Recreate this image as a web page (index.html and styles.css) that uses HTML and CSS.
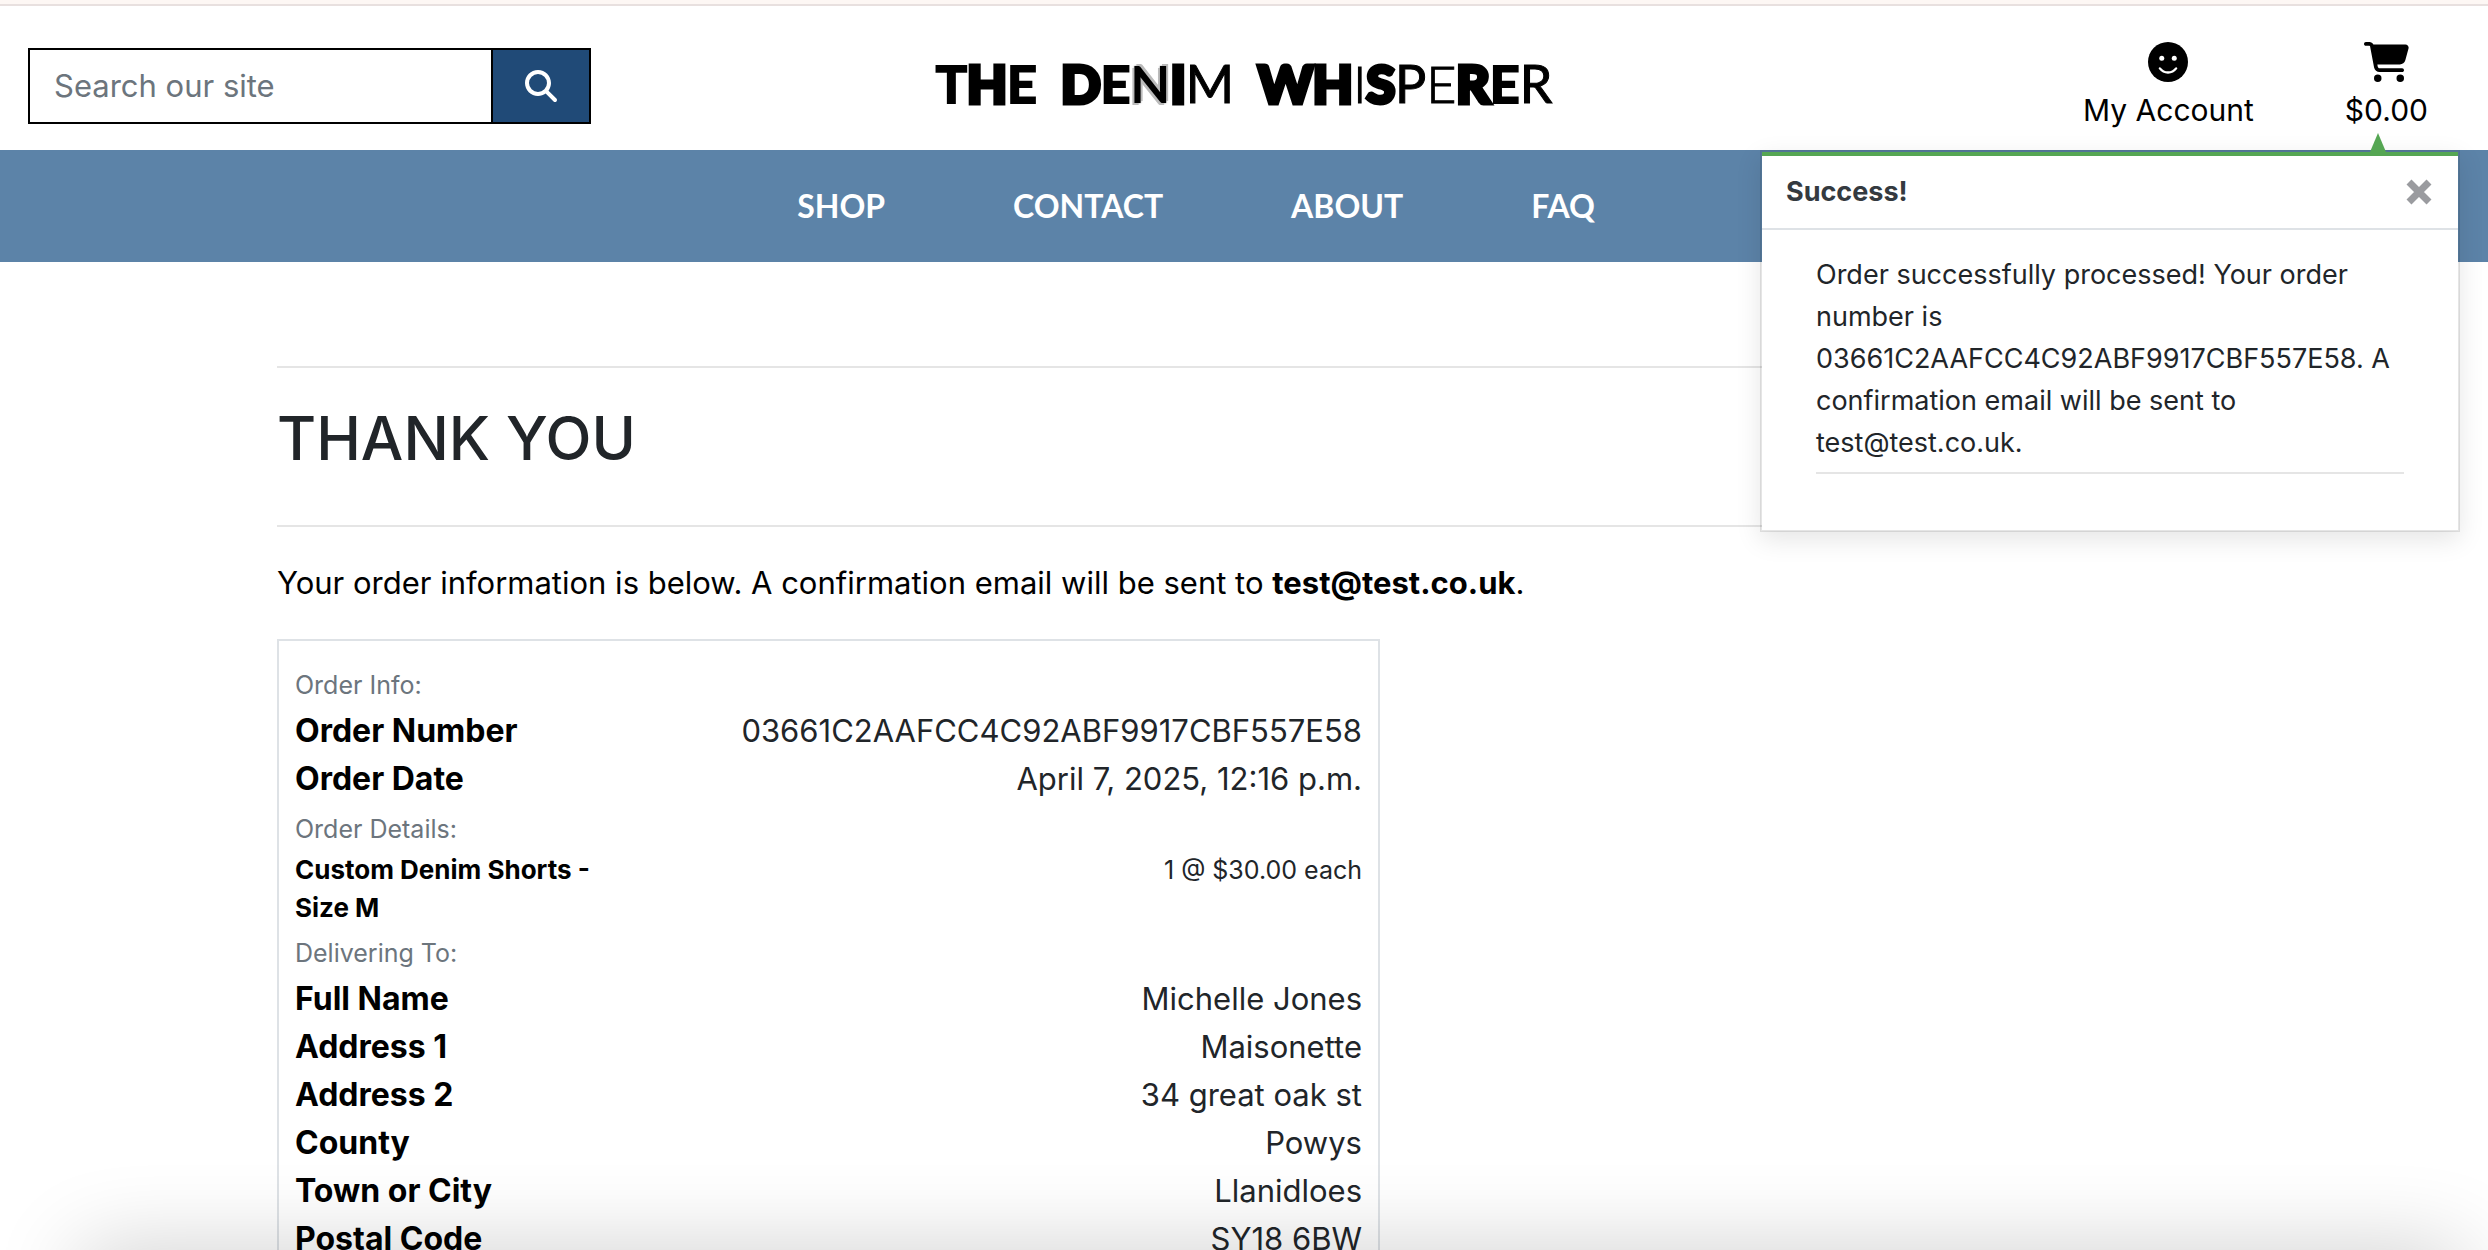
FILE: index.html
```html
<!DOCTYPE html>
<html lang="en">
<head>
<meta charset="utf-8">
<title>The Denim Whisperer</title>
<link rel="stylesheet" href="styles.css">
</head>
<body>
<header class="site-header">
  <form class="search" role="search">
    <input class="search-input" type="text" placeholder="Search our site" aria-label="Search our site">
    <button class="search-button" type="submit" aria-label="Search">
      <svg viewBox="0 0 512 512" width="32" height="32" fill="currentColor"><path d="M416 208c0 45.900-14.900 88.300-40 122.700L502.600 457.400c12.500 12.500 12.500 32.800 0 45.300s-32.800 12.500-45.300 0L330.700 376c-34.400 25.200-76.800 40-122.700 40C93.100 416 0 322.900 0 208S93.100 0 208 0S416 93.100 416 208zM208 352a144 144 0 1 0 0-288 144 144 0 1 0 0 288z"/></svg>
    </button>
  </form>
  <a class="logo" href="#"><span class="word"><span class="bold">T</span><span class="black">H</span><span class="bold">E</span></span> <span class="word"><span class="black">D</span><span class="bold">E</span><span class="outlined">N</span><span class="black">I</span><span class="regular">M</span></span> <span class="word"><span class="black">WH</span><span class="light">I</span><span class="black">S</span><span class="regular">P</span><span class="light">E</span><span class="black">R</span><span class="bold">E</span><span class="regular">R</span></span></a>
  <div class="account-links">
    <a class="account-link" href="#">
      <svg viewBox="0 0 512 512" width="40" height="40"><circle cx="256" cy="256" r="256"/><circle class="cutout" cx="176" cy="208" r="32"/><circle class="cutout" cx="336" cy="208" r="32"/><path class="smile" d="M152 338q40 52 104 52t104-52"/></svg>
      <span>My Account</span>
    </a>
    <a class="account-link" href="#">
      <svg viewBox="0 0 576 512" width="45" height="40"><path d="M0 24C0 10.700 10.700 0 24 0H69.500c22 0 41.500 12.800 50.600 32h411c26.300 0 45.500 25 38.600 50.400l-41 152.300c-8.500 31.400-37 53.300-69.500 53.300H170.700l5.400 28.500c2.200 11.300 12.100 19.500 23.600 19.500H488c13.300 0 24 10.700 24 24s-10.700 24-24 24H199.700c-34.600 0-64.300-24.600-70.700-58.500L77.400 54.500c-.7-3.800-4-6.500-7.900-6.500H24C10.700 48 0 37.300 0 24zM128 464a48 48 0 1 1 96 0 48 48 0 1 1-96 0zm336-48a48 48 0 1 1 0 96 48 48 0 1 1 0-96z"/></svg>
      <span>$0.00</span>
    </a>
  </div>
</header>
<nav class="main-nav">
  <a href="#">SHOP</a>
  <a href="#">CONTACT</a>
  <a href="#">ABOUT</a>
  <a href="#">FAQ</a>
</nav>
<aside class="toast" role="status">
  <div class="toast-header">
    <strong>Success!</strong>
    <button class="toast-close" type="button" aria-label="Close">
      <svg viewBox="0 0 26 26" width="26" height="26"><path d="M3 3L23 23M23 3L3 23"/></svg>
    </button>
  </div>
  <div class="toast-body">
    <p>Order successfully processed! Your order number is 03661C2AAFCC4C92ABF9917CBF557E58. A confirmation email will be sent to test@test.co.uk.</p>
  </div>
</aside>
<main class="container">
  <h1>THANK YOU</h1>
  <p class="intro">Your order information is below. A confirmation email will be sent to <strong>test@test.co.uk</strong>.</p>
  <section class="order">
    <h2><small>Order Info:</small></h2>
    <dl>
      <div><dt>Order Number</dt><dd>03661C2AAFCC4C92ABF9917CBF557E58</dd></div>
      <div><dt>Order Date</dt><dd>April 7, 2025, 12:16 p.m.</dd></div>
    </dl>
    <h2><small>Order Details:</small></h2>
    <dl class="items">
      <div><dt>Custom Denim Shorts - Size M</dt><dd>1 @ $30.00 each</dd></div>
    </dl>
    <h2><small>Delivering To:</small></h2>
    <dl>
      <div><dt>Full Name</dt><dd>Michelle Jones</dd></div>
      <div><dt>Address 1</dt><dd>Maisonette</dd></div>
      <div><dt>Address 2</dt><dd>34 great oak st</dd></div>
      <div><dt>County</dt><dd>Powys</dd></div>
      <div><dt>Town or City</dt><dd>Llanidloes</dd></div>
      <div><dt>Postal Code</dt><dd>SY18 6BW</dd></div>
    </dl>
  </section>
</main>
<div class="bottom-shade"></div>
</body>
</html>
```
FILE: styles.css
```css
* { box-sizing: border-box; }

body {
  margin: 0;
  height: 100vh;
  overflow: hidden;
  position: relative;
  background: #fff;
  color: #212529;
  font: 400 31px/48px Inter, "Liberation Sans", sans-serif;
}

a { color: inherit; text-decoration: none; }
p, h1, h2, dl, dd { margin: 0; }

.site-header {
  display: grid;
  grid-template-columns: 1fr auto 1fr;
  align-items: center;
  height: 150px;
  padding: 6px 28px 0;
  background: linear-gradient(#fdf7f4 4px, #e8e0df 4px, #e8e0df 6px, #fff 6px);
  color: #000;
}

.search {
  display: flex;
  width: 563px;
  height: 76px;
  margin-top: 16px;
  border: 2px solid #000;
}
.search-input {
  flex: 1;
  min-width: 0;
  padding: 0 24px;
  border: 0;
  background: #fff;
  font: inherit;
  color: #000;
}
.search-input::placeholder { color: #6c757d; opacity: 1; }
.search-button {
  display: flex;
  align-items: center;
  justify-content: center;
  width: 98px;
  padding: 0;
  border: 0;
  border-left: 2px solid #000;
  background: #204a77;
  color: #fff;
}

.logo {
  display: flex;
  gap: 24px;
  margin-top: 10px;
  font: 700 52px/64px Lato, sans-serif;
}
.word { display: flex; }
.black { -webkit-text-stroke: 5px #000; }
.bold { -webkit-text-stroke: 2px #000; }
.regular { font-weight: 400; -webkit-text-stroke: 1px #000; }
.light { font-weight: 300; -webkit-text-stroke: 1px #000; }
.outlined { text-shadow: 2px -2px 0 #bbb, -2px 2px 0 #bbb, 0 0 2px #777; }

.account-links {
  display: flex;
  justify-content: flex-end;
  gap: 91px;
  padding: 20px 32px 0 0;
  font-size: 30px;
}
.account-link {
  display: flex;
  flex-direction: column;
  align-items: center;
  gap: 4px;
}
.cutout { fill: #fff; }
.smile { fill: none; stroke: #fff; stroke-width: 30; stroke-linecap: round; }

.main-nav {
  display: flex;
  align-items: center;
  justify-content: center;
  gap: 128px;
  height: 112px;
  padding-right: 96px;
  background: #5c83a8;
  color: #fff;
  font-family: Lato, sans-serif;
  font-weight: 700;
  font-size: 32px;
}

.toast {
  position: absolute;
  top: 150px;
  right: 28px;
  width: 700px;
  border: 2px solid rgba(0, 0, 0, .1);
  background: #fff;
  background-clip: padding-box;
  box-shadow: 0 8px 24px rgba(0, 0, 0, .1);
  font-size: 27px;
  line-height: 42px;
}
.toast::before {
  content: "";
  position: absolute;
  top: -19px;
  right: 72px;
  border: 8px solid transparent;
  border-top: 0;
  border-bottom: 19px solid #55a653;
}
.toast-header {
  display: flex;
  align-items: center;
  justify-content: space-between;
  height: 78px;
  padding: 0 26px 0 24px;
  border-top: 4px solid #55a653;
  border-bottom: 2px solid #dee2e6;
  color: #343a40;
}
.toast-close {
  display: flex;
  padding: 0;
  border: 0;
  background: none;
}
.toast-close path { stroke: #9a9b9f; stroke-width: 7; }
.toast-body { padding: 24px 54px 56px; }
.toast-body p { padding-bottom: 8px; border-bottom: 2px solid #e5e5e5; }

.container {
  max-width: 1934px;
  margin: 0 auto;
  padding-top: 104px;
}
h1 {
  padding: 32px 0 48px;
  border-top: 2px solid #e5e5e5;
  border-bottom: 2px solid #e5e5e5;
  font-weight: 500;
  font-size: 60px;
  line-height: 77px;
}
.intro { padding: 32px 0; color: #000; }

.order {
  max-width: 1103px;
  padding: 18px 16px;
  border: 2px solid #dee2e6;
}
h2 { font-weight: 400; font-size: 31px; }
small { font-size: 25px; line-height: 25px; color: #6c757d; }
.order dl > div { display: flex; justify-content: space-between; }
dt { font-weight: 700; font-size: 32px; color: #000; }
dd { text-align: right; }
.items { font-size: 25px; line-height: 38px; }
.items dt { max-width: 330px; font-size: 26px; }

.bottom-shade {
  position: absolute;
  top: 100%;
  left: 80px;
  right: 24px;
  height: 80px;
  box-shadow: 0 0 88px rgba(0, 0, 0, .2);
}
```
